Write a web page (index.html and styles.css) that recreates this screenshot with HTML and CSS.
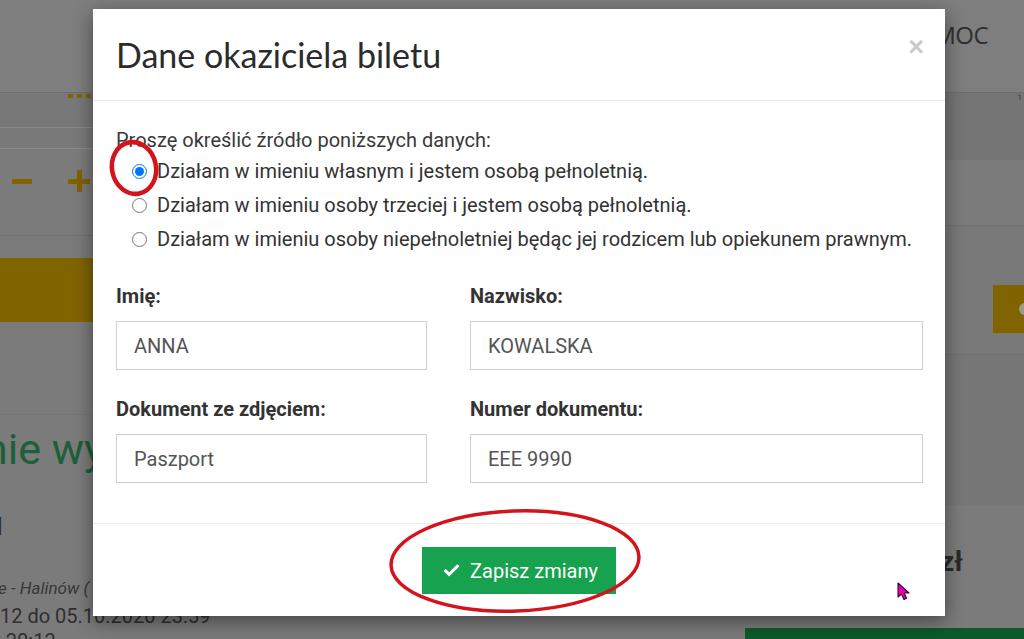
FILE: index.html
```html
<!DOCTYPE html>
<html lang="pl">
<head>
<meta charset="utf-8">
<title>Dane okaziciela biletu</title>
<link rel="stylesheet" href="styles.css">
</head>
<body>
<div class="page">
  <div class="topbar"><span class="menu-item">MOC</span></div>
  <div class="mid">
    <div class="lcol">
      <div class="l-dots"><span class="dot"></span><span class="dot"></span><span class="dot"></span></div>
      <div class="l-lines"></div>
      <div class="l-qty"><span class="qty-minus"></span><span class="qty-plus"></span></div>
      <div class="l-gap1"></div>
      <div class="l-yellow"></div>
      <div class="l-gap2"></div>
      <div class="l-heading">nie wybrano</div>
      <div class="l-mark">l</div>
      <div class="l-route">e - Halinów (</div>
      <div class="l-date">12 do 05.10.2020 23:59</div>
      <div class="l-time">l 20:12</div>
    </div>
    <div class="center"></div>
    <div class="rcol">
      <div class="r-band1"><span class="r-num">1</span></div>
      <div class="r-band2"></div>
      <div class="r-band3"><div class="r-btn"><span class="r-btn-icon"></span></div></div>
      <div class="r-band4"></div>
      <div class="r-price">zł</div>
      <div class="r-green"></div>
    </div>
  </div>
</div>

<div class="modal">
  <div class="modal-header">
    <h2 class="modal-title">Dane okaziciela biletu</h2>
    <span class="close">×</span>
  </div>
  <div class="modal-body">
    <p class="intro">Proszę określić źródło poniższych danych:</p>
    <div class="radios">
      <label class="radio"><input type="radio" name="src" checked><span>Działam w imieniu własnym i jestem osobą pełnoletnią.</span></label>
      <label class="radio"><input type="radio" name="src"><span>Działam w imieniu osoby trzeciej i jestem osobą pełnoletnią.</span></label>
      <label class="radio"><input type="radio" name="src"><span>Działam w imieniu osoby niepełnoletniej będąc jej rodzicem lub opiekunem prawnym.</span></label>
    </div>
    <div class="form-grid">
      <div class="field">
        <label class="field-label">Imię:</label>
        <input class="field-input" type="text" value="ANNA">
      </div>
      <div class="field">
        <label class="field-label">Nazwisko:</label>
        <input class="field-input" type="text" value="KOWALSKA">
      </div>
      <div class="field">
        <label class="field-label">Dokument ze zdjęciem:</label>
        <input class="field-input" type="text" value="Paszport">
      </div>
      <div class="field">
        <label class="field-label">Numer dokumentu:</label>
        <input class="field-input" type="text" value="EEE 9990">
      </div>
    </div>
  </div>
  <div class="modal-footer">
    <button class="btn-save" type="button">
      <svg class="check" viewBox="0 0 20 16" width="19" height="15"><path d="M1.5 8.5 L3.8 6.2 L7.5 9.9 L16.2 1.2 L18.5 3.5 L7.5 14.5 Z" fill="#fff"/></svg>
      <span>Zapisz zmiany</span>
    </button>
  </div>
</div>

<svg class="annot" viewBox="0 0 1024 639" width="1024" height="639">
  <ellipse cx="134" cy="168" rx="22" ry="26" fill="none" stroke="#d4141c" stroke-width="4.5" transform="rotate(-12 134 168)"/>
  <ellipse cx="515" cy="561" rx="124" ry="50" fill="none" stroke="#d4141c" stroke-width="3.5" transform="rotate(-2 515 561)"/>
</svg>

<svg class="cursor" viewBox="0 0 16 20" width="16" height="20">
  <path d="M1 1 L1 15 L4.5 12 L7 17.5 L9.5 16.3 L7.2 11 L12 11 Z" fill="#e400b8" stroke="#3a0030" stroke-width="1.1" stroke-linejoin="round"/>
</svg>
</body>
</html>
```
FILE: styles.css
```css
* { box-sizing: border-box; }
html, body { margin: 0; padding: 0; }
body {
  width: 1024px;
  height: 639px;
  overflow: hidden;
  position: relative;
  font-family: Roboto, "Liberation Sans", sans-serif;
  background: #7b7b7b;
}

/* ---------- dimmed background page ---------- */
.page {
  width: 1024px;
  height: 639px;
  overflow: hidden;
  display: flex;
  flex-direction: column;
  background: #7b7b7b;
}
.topbar {
  height: 93px;
  flex: none;
  background: #7e7e7e;
  border-bottom: 1px solid #6d6d6d;
  display: flex;
  justify-content: flex-end;
  padding: 20px 36px 0 0;
}
.menu-item {
  font-family: "Open Sans", Roboto, sans-serif;
  font-size: 24px;
  color: #2e2e2e;
  line-height: 30px;
  letter-spacing: -0.5px;
}
.mid {
  flex: 1;
  display: flex;
}
.lcol {
  width: 93px;
  flex: none;
  display: flex;
  flex-direction: column;
  white-space: nowrap;
}
.l-dots {
  height: 34px;
  background: #787878;
  padding: 1px 0 0 68px;
  display: flex;
  gap: 4px;
}
.dot {
  width: 5px;
  height: 4px;
  background: #7f6400;
  border-radius: 1px;
}
.l-lines {
  height: 22px;
  background: #797979;
  border-top: 1px solid #8a8a8a;
  border-bottom: 1px solid #8a8a8a;
}
.l-qty {
  height: 87px;
  background: #7b7b7b;
  border-bottom: 1px solid #6e6e6e;
  display: flex;
  align-items: flex-start;
  padding: 21px 0 0 12px;
  gap: 36px;
}
.qty-minus {
  margin-top: 9px;
  width: 20px;
  height: 5px;
  background: #7f6400;
}
.qty-plus {
  width: 22px;
  height: 22px;
  background:
    linear-gradient(#7f6400, #7f6400) center / 22px 5px no-repeat,
    linear-gradient(#7f6400, #7f6400) center / 5px 22px no-repeat;
}
.l-gap1 { height: 22px; background: #7a7a7a; }
.l-yellow { height: 64px; background: #7f6400; }
.l-gap2 {
  height: 93px;
  background: #7b7b7b;
  border-bottom: 1px solid #767676;
}
.l-heading {
  margin-top: 8px;
  margin-left: -16px;
  font-size: 43px;
  line-height: 52px;
  color: #1d5f3a;
}
.l-mark {
  margin-top: 38px;
  margin-left: -4px;
  font-size: 24px;
  line-height: 28px;
  font-weight: 700;
  color: #2c2c2c;
}
.l-route {
  margin-top: 35px;
  margin-left: -2px;
  font-size: 17px;
  line-height: 24px;
  font-style: italic;
  color: #383838;
}
.l-date {
  margin-top: 3px;
  font-size: 20px;
  line-height: 26px;
  color: #2f2f2f;
}
.l-time {
  font-size: 20px;
  line-height: 24px;
  color: #2f2f2f;
  margin-left: -4px;
}
.center { flex: 1; }
.rcol {
  width: 90px;
  flex: none;
  display: flex;
  flex-direction: column;
}
.r-band1 {
  height: 67px;
  background: #757575;
  display: flex;
  justify-content: flex-end;
  padding-right: 2px;
}
.r-num { font-size: 8px; line-height: 10px; color: #333; }
.r-band2 { height: 65px; background: #7b7b7b; }
.r-band3 {
  height: 130px;
  background: #797979;
  border-top: 1px solid #717171;
  border-bottom: 1px solid #707070;
  padding: 59px 0 0 59px;
}
.r-btn {
  width: 40px;
  height: 48px;
  background: #7f6400;
  padding: 18px 0 0 26px;
}
.r-btn-icon {
  display: block;
  width: 12px;
  height: 12px;
  border-radius: 50%;
  background: #9a9a8a;
}
.r-band4 { height: 150px; background: #777; }
.r-price {
  margin-top: 41px;
  margin-left: 6px;
  font-size: 28px;
  line-height: 32px;
  font-weight: 700;
  color: #2a2a2a;
}
.r-green {
  margin-top: 50px;
  margin-left: -189px;
  width: 289px;
  height: 14px;
  background: #0c5a2a;
}

/* ---------- modal ---------- */
.modal {
  position: absolute;
  left: 93px;
  top: 9px;
  width: 852px;
  height: 607px;
  background: #fff;
  box-shadow: 0 5px 18px rgba(0,0,0,0.45);
  display: flex;
  flex-direction: column;
}
.modal-header {
  height: 92px;
  flex: none;
  border-bottom: 1px solid #e8e8e8;
  display: flex;
  justify-content: space-between;
  align-items: flex-start;
  padding: 26px 21px 0 23px;
}
.modal-title {
  margin: 0;
  font-family: Lato, "Open Sans", sans-serif;
  font-weight: 400;
  font-size: 34px;
  line-height: 40px;
  color: #2b2b2b;
}
.close {
  font-family: "Liberation Sans", Arial, sans-serif;
  font-weight: 700;
  font-size: 27px;
  line-height: 24px;
  color: #cbcbcb;
  margin-top: 0;
}
.modal-body {
  flex: 1;
  padding: 27px 23px 0 23px;
  color: #333;
  font-size: 20px;
}
.intro {
  margin: 0;
  line-height: 24px;
  color: #3a3a3a;
}
.radios {
  margin-top: 2px;
  display: flex;
  flex-direction: column;
}
.radio {
  height: 34px;
  display: flex;
  align-items: center;
  padding-left: 16px;
  gap: 10px;
  line-height: 24px;
  color: #333;
}
.radio input {
  margin: 0;
  width: 15px;
  height: 15px;
  flex: none;
}
.form-grid {
  margin-top: 28px;
  display: grid;
  grid-template-columns: 311px 453px;
  column-gap: 43px;
  row-gap: 27px;
}
.field {
  display: flex;
  flex-direction: column;
}
.field-label {
  font-weight: 700;
  font-size: 20px;
  line-height: 24px;
  color: #333;
  margin-bottom: 13px;
}
.field-input {
  height: 49px;
  border: 1px solid #d0d0d0;
  border-radius: 0;
  padding: 0 17px;
  font-family: Roboto, "Liberation Sans", sans-serif;
  font-size: 20px;
  color: #555;
  background: #fff;
  outline: none;
}
.modal-footer {
  height: 93px;
  flex: none;
  border-top: 1px solid #ececec;
  display: flex;
  justify-content: center;
  align-items: flex-start;
  padding-top: 23px;
}
.btn-save {
  height: 47px;
  width: 194px;
  border: 0;
  border-radius: 0;
  background: #16a24e;
  color: #fff;
  font-family: Roboto, "Liberation Sans", sans-serif;
  font-size: 20px;
  display: flex;
  align-items: center;
  justify-content: center;
  gap: 9px;
  padding: 0 0 0 2px;
}
.check { display: block; }

/* ---------- overlays ---------- */
.annot {
  position: absolute;
  left: 0;
  top: 0;
  pointer-events: none;
}
.cursor {
  position: absolute;
  left: 897px;
  top: 582px;
}
```
